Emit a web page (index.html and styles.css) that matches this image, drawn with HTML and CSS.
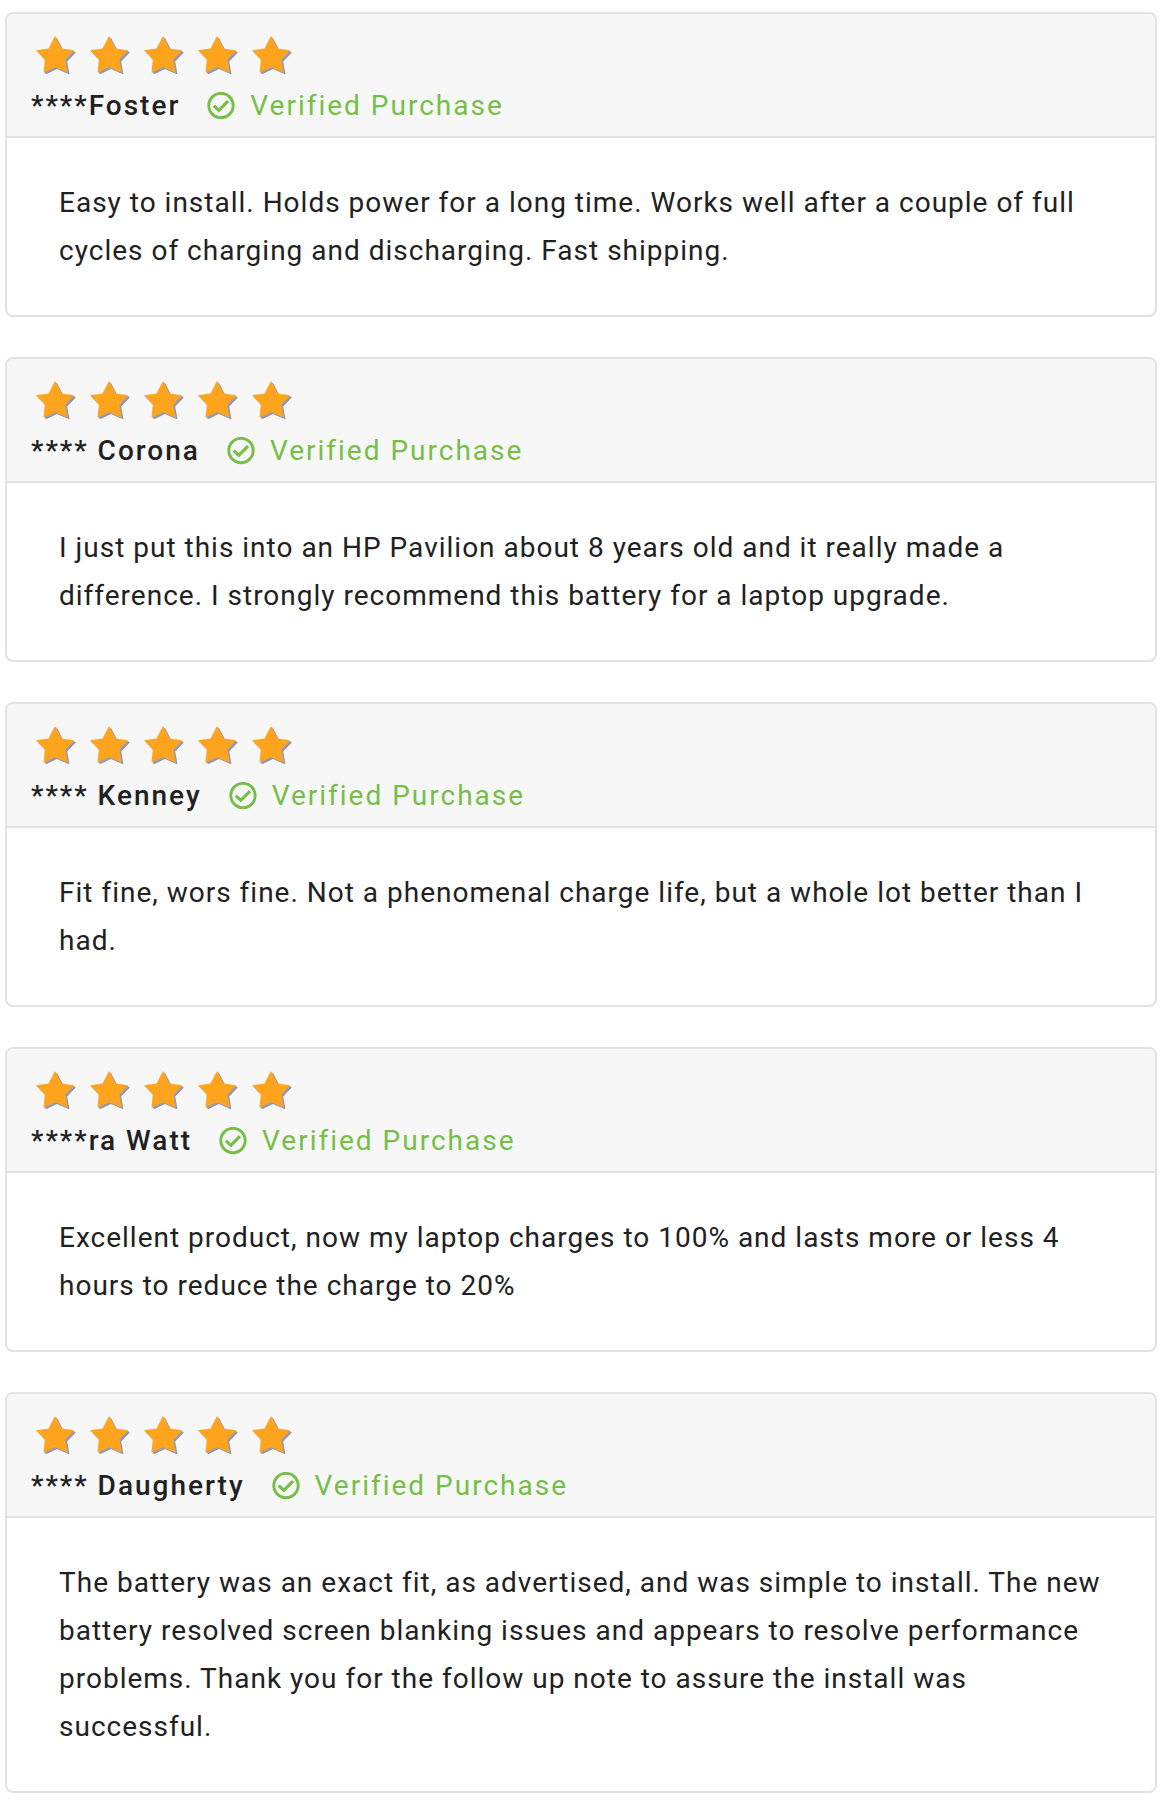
FILE: index.html
```
<!DOCTYPE html>
<html lang="en">
<head>
<meta charset="utf-8">
<meta name="viewport" content="width=device-width, initial-scale=1">
<title>Customer reviews</title>
<link rel="stylesheet" href="styles.css">
</head>
<body>
<svg class="sprite" aria-hidden="true">
  <defs>
    <path id="star-shape" d="M19 0 25.500 12.500 38 14.300 29.200 23.500 31.500 36.500 19 31 7.500 36.500 8.800 23.500 0 14.300 12.500 12.500Z"/>
    <symbol id="star" viewBox="0 0 40 38">
      <use href="#star-shape" x="2" y="2" fill="#8c96a4"/>
      <use href="#star-shape" x="1" y="1" fill="#a99ca6"/>
      <use href="#star-shape" fill="#ffa41c"/>
    </symbol>
    <symbol id="check" viewBox="0 0 28 28">
      <circle cx="14" cy="13.500" r="12.200" fill="none" stroke="currentColor" stroke-width="2.900"/>
      <path d="M6.800 13.600 11.800 18.300 21 9.100" fill="none" stroke="currentColor" stroke-width="3.200"/>
    </symbol>
  </defs>
</svg>
<main class="reviews">
  <article class="review">
    <header class="review-head">
      <div class="stars" role="img" aria-label="5 out of 5 stars">
        <svg class="star"><use href="#star"/></svg><svg class="star"><use href="#star"/></svg><svg class="star"><use href="#star"/></svg><svg class="star"><use href="#star"/></svg><svg class="star"><use href="#star"/></svg>
      </div>
      <div class="byline">
        <span class="author">****Foster</span>
        <span class="verified"><svg class="check"><use href="#check"/></svg>Verified Purchase</span>
      </div>
    </header>
    <p class="review-text">Easy to install. Holds power for a long time. Works well after a couple of full cycles of charging and discharging. Fast shipping.</p>
  </article>
  <article class="review">
    <header class="review-head">
      <div class="stars" role="img" aria-label="5 out of 5 stars">
        <svg class="star"><use href="#star"/></svg><svg class="star"><use href="#star"/></svg><svg class="star"><use href="#star"/></svg><svg class="star"><use href="#star"/></svg><svg class="star"><use href="#star"/></svg>
      </div>
      <div class="byline">
        <span class="author">**** Corona</span>
        <span class="verified"><svg class="check"><use href="#check"/></svg>Verified Purchase</span>
      </div>
    </header>
    <p class="review-text">I just put this into an HP Pavilion about 8 years old and it really made a difference. I strongly recommend this battery for a laptop upgrade.</p>
  </article>
  <article class="review">
    <header class="review-head">
      <div class="stars" role="img" aria-label="5 out of 5 stars">
        <svg class="star"><use href="#star"/></svg><svg class="star"><use href="#star"/></svg><svg class="star"><use href="#star"/></svg><svg class="star"><use href="#star"/></svg><svg class="star"><use href="#star"/></svg>
      </div>
      <div class="byline">
        <span class="author">**** Kenney</span>
        <span class="verified"><svg class="check"><use href="#check"/></svg>Verified Purchase</span>
      </div>
    </header>
    <p class="review-text">Fit fine, wors fine. Not a phenomenal charge life, but a whole lot better than I had.</p>
  </article>
  <article class="review">
    <header class="review-head">
      <div class="stars" role="img" aria-label="5 out of 5 stars">
        <svg class="star"><use href="#star"/></svg><svg class="star"><use href="#star"/></svg><svg class="star"><use href="#star"/></svg><svg class="star"><use href="#star"/></svg><svg class="star"><use href="#star"/></svg>
      </div>
      <div class="byline">
        <span class="author">****ra Watt</span>
        <span class="verified"><svg class="check"><use href="#check"/></svg>Verified Purchase</span>
      </div>
    </header>
    <p class="review-text">Excellent product, now my laptop charges to 100% and lasts more or less 4 hours to reduce the charge to 20%</p>
  </article>
  <article class="review">
    <header class="review-head">
      <div class="stars" role="img" aria-label="5 out of 5 stars">
        <svg class="star"><use href="#star"/></svg><svg class="star"><use href="#star"/></svg><svg class="star"><use href="#star"/></svg><svg class="star"><use href="#star"/></svg><svg class="star"><use href="#star"/></svg>
      </div>
      <div class="byline">
        <span class="author">**** Daugherty</span>
        <span class="verified"><svg class="check"><use href="#check"/></svg>Verified Purchase</span>
      </div>
    </header>
    <p class="review-text">The battery was an exact fit, as advertised, and was simple to install. The new battery resolved screen blanking issues and appears to resolve performance problems. Thank you for the follow up note to assure the install was successful.</p>
  </article>
</main>
</body>
</html>
```
FILE: styles.css
```
* {
  box-sizing: border-box;
}

body {
  margin: 0;
  background: #fff;
  color: #212121;
  font-family: Roboto, "Liberation Sans", sans-serif;
  font-size: 28px;
}

.sprite {
  position: absolute;
  width: 0;
  height: 0;
}

.reviews {
  display: flex;
  flex-direction: column;
  gap: 40px;
  padding: 12px 6px 18px 5px;
}

.review {
  border: 2px solid #e2e2e2;
  border-radius: 8px;
  overflow: hidden;
}

.review-head {
  display: flex;
  flex-direction: column;
  gap: 12px;
  padding: 22px 24px 10px;
  border-bottom: 2px solid #e2e2e2;
  background: #f7f7f7;
}

.stars {
  display: flex;
  gap: 14px;
  padding-left: 5px;
}

.star {
  width: 40px;
  height: 38px;
}

.byline {
  display: flex;
  align-items: center;
  gap: 27px;
  line-height: 40px;
  letter-spacing: 2px;
}

.author {
  font-weight: 500;
}

.verified {
  display: flex;
  align-items: center;
  gap: 15px;
  color: #75bf48;
}

.check {
  width: 28px;
  height: 28px;
}

.review-text {
  margin: 0;
  padding: 41px 52px 40px;
  line-height: 48px;
  letter-spacing: 1px;
}
```
